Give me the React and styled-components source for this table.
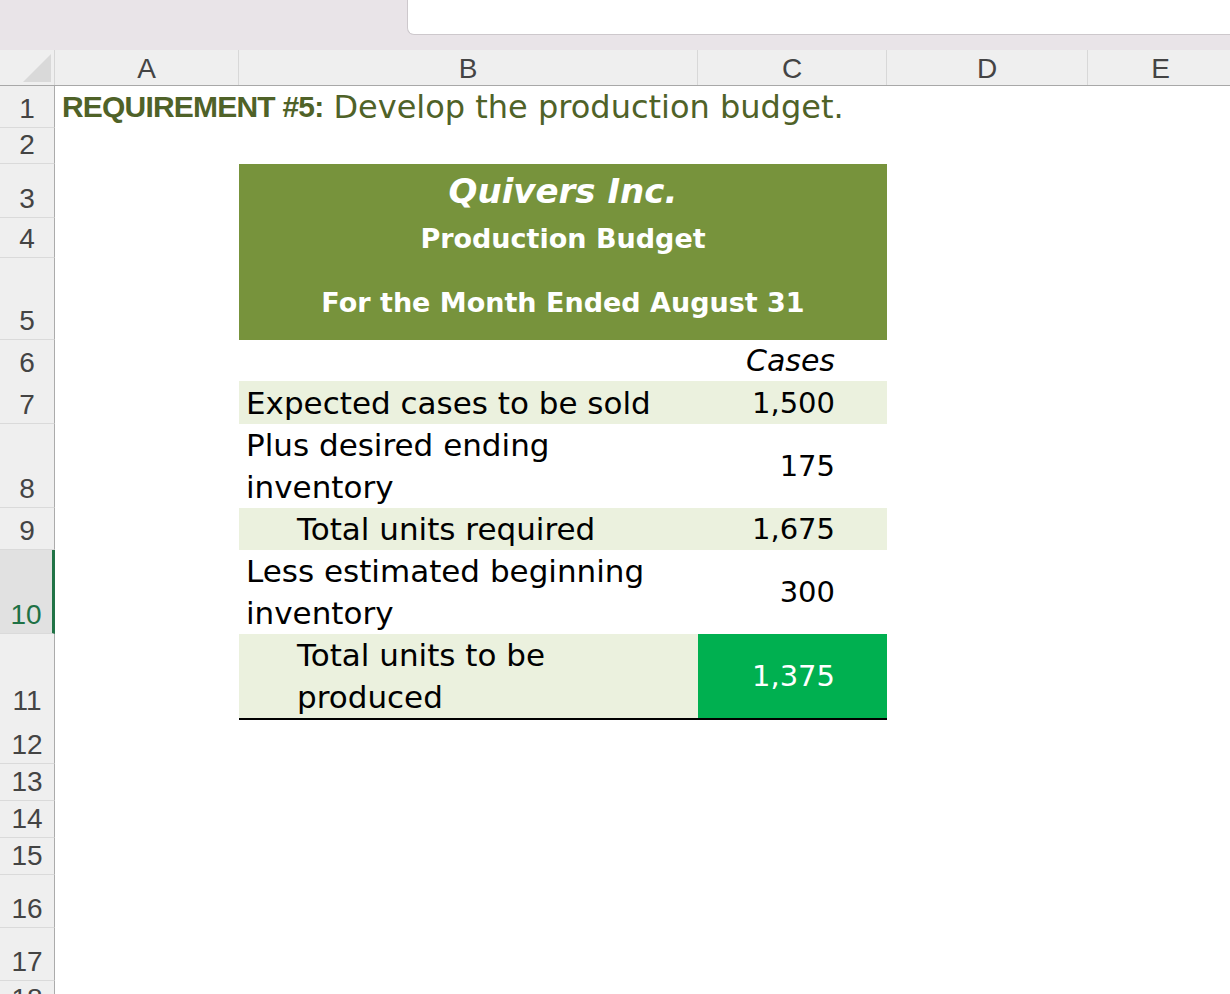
import React from 'react';
import styled, { createGlobalStyle } from 'styled-components';

const GlobalStyle = createGlobalStyle`
  html, body { margin: 0; padding: 0; background: #ffffff; }
  body { font-family: "DejaVu Sans", sans-serif; overflow: hidden; }
  #root { width: 1230px; height: 994px; overflow: hidden; }
`;

const COLS = '55px 184px 459px 189px 201px 146px 1fr';

const Page = styled.div`
  width: 1230px;
  height: 994px;
  overflow: hidden;
  background: #ffffff;
  display: flex;
  flex-direction: column;
`;

const TopBar = styled.div`
  flex: none;
  height: 50px;
  background: #e9e4e8;
  display: flex;
  justify-content: flex-end;
  align-items: flex-start;
`;

const FormulaBox = styled.div`
  width: 823px;
  height: 35px;
  box-sizing: border-box;
  background: #ffffff;
  border-left: 1px solid #cdc8cc;
  border-bottom: 1px solid #cdc8cc;
  border-bottom-left-radius: 7px;
`;

const Sheet = styled.div`
  display: flex;
  flex-direction: column;
  flex: none;
`;

const HeaderRow = styled.div`
  display: grid;
  grid-template-columns: ${COLS};
  height: 36px;
  box-sizing: border-box;
  background: #efefef;
  border-bottom: 1px solid #a8a8a8;
`;

const Corner = styled.div`
  display: flex;
  align-items: flex-end;
  justify-content: flex-end;
  padding: 0 3px 3px 0;
  border-right: 1px solid #d6d6d6;
`;

const ColHead = styled.div`
  display: flex;
  align-items: center;
  justify-content: center;
  padding-top: 3px;
  border-right: 1px solid #d8d8d8;
  font-family: "Liberation Sans", Arial, sans-serif;
  font-size: 28px;
  color: #444444;
`;

const Row = styled.div`
  display: grid;
  grid-template-columns: ${COLS};
  height: ${(p) => p.$h}px;
  flex: none;
`;

const RowHead = styled.div`
  grid-column: 1;
  display: flex;
  align-items: flex-end;
  justify-content: center;
  box-sizing: border-box;
  padding-bottom: 4px;
  background: ${(p) => (p.$selected ? '#e1e1e1' : '#efefef')};
  border-right: ${(p) => (p.$selected ? '3px solid #217346' : '1px solid #ababab')};
  border-bottom: 1px solid #dadada;
  font-family: "Liberation Sans", Arial, sans-serif;
  font-size: 28px;
  line-height: 1;
  color: ${(p) => (p.$selected ? '#1e7145' : '#444444')};
`;

const TitleCell = styled.div`
  grid-column: 2 / span 6;
  display: flex;
  align-items: flex-end;
  padding-left: 7px;
  white-space: nowrap;
  font-size: 32px;
  line-height: 42px;
  color: #4f6228;
`;

const TitleStrong = styled.span`
  font-family: "Liberation Sans", Arial, sans-serif;
  font-weight: bold;
  font-size: 30px;
  letter-spacing: -0.8px;
  margin-right: 10px;
`;

const Banner = styled.div`
  grid-column: 3 / span 2;
  display: flex;
  align-items: center;
  justify-content: center;
  padding-top: ${(p) => p.$shift || 0}px;
  background: #77933c;
  color: #ffffff;
  font-weight: bold;
  font-style: ${(p) => (p.$italic ? 'italic' : 'normal')};
  font-size: ${(p) => p.$size}px;
  white-space: nowrap;
`;

const Label = styled.div`
  grid-column: 3;
  display: flex;
  align-items: flex-end;
  box-sizing: border-box;
  padding-left: ${(p) => (p.$indent ? 58 : 7)}px;
  background: ${(p) => (p.$shade ? '#ebf1de' : 'transparent')};
  border-bottom: ${(p) => (p.$total ? '2px solid #000000' : 'none')};
  font-size: 31px;
  line-height: 42px;
  color: #000000;
  white-space: nowrap;
`;

const LabelText = styled.span`
  display: block;
`;

const Amount = styled.div`
  grid-column: 4;
  display: flex;
  align-items: center;
  justify-content: flex-end;
  box-sizing: border-box;
  padding-right: 52px;
  background: ${(p) => (p.$total ? '#00b050' : p.$shade ? '#ebf1de' : 'transparent')};
  border-bottom: ${(p) => (p.$total ? '2px solid #000000' : 'none')};
  font-size: 29px;
  line-height: 42px;
  color: ${(p) => (p.$total ? '#ffffff' : '#000000')};
  white-space: nowrap;
`;

const UnitHeading = styled(Amount)`
  align-items: flex-end;
  font-style: italic;
  font-size: 30px;
`;

const columns = ['A', 'B', 'C', 'D', 'E'];

const heights = {
  1: 42, 2: 36, 3: 54, 4: 40, 5: 82, 6: 41, 7: 43, 8: 84, 9: 42,
  10: 84, 11: 84, 12: 46, 13: 37, 14: 37, 15: 37, 16: 53, 17: 53, 18: 37,
};

const items = {
  7: { label: ['Expected cases to be sold'], value: '1,500', shade: true },
  8: { label: ['Plus desired ending', 'inventory'], value: '175' },
  9: { label: ['Total units required'], value: '1,675', shade: true, indent: true },
  10: { label: ['Less estimated beginning', 'inventory'], value: '300' },
  11: { label: ['Total units to be', 'produced'], value: '1,375', shade: true, indent: true, total: true },
};

const banners = {
  3: { text: 'Quivers Inc.', size: 34, italic: true },
  4: { text: 'Production Budget', size: 27 },
  5: { text: 'For the Month Ended August 31', size: 27, shift: 6 },
};

const SELECTED_ROW = 10;

function RowContent({ n }) {
  if (n === 1) {
    return (
      <TitleCell>
        <TitleStrong>REQUIREMENT #5:</TitleStrong>
        Develop the production budget.
      </TitleCell>
    );
  }
  if (banners[n]) {
    const b = banners[n];
    return (
      <Banner $size={b.size} $italic={b.italic} $shift={b.shift}>
        {b.text}
      </Banner>
    );
  }
  if (n === 6) {
    return <UnitHeading>Cases</UnitHeading>;
  }
  if (items[n]) {
    const it = items[n];
    return (
      <>
        <Label $shade={it.shade} $indent={it.indent} $total={it.total}>
          <LabelText>
            {it.label.map((line, i) => (
              <React.Fragment key={i}>
                {i > 0 && <br />}
                {line}
              </React.Fragment>
            ))}
          </LabelText>
        </Label>
        <Amount $shade={it.shade} $total={it.total}>
          {it.value}
        </Amount>
      </>
    );
  }
  return null;
}

export default function App() {
  const rowNumbers = Object.keys(heights).map(Number);
  return (
    <>
      <GlobalStyle />
      <Page>
        <TopBar>
          <FormulaBox />
        </TopBar>
        <Sheet>
          <HeaderRow>
            <Corner>
              <svg width="28" height="28" viewBox="0 0 28 28">
                <polygon points="28,0 28,28 0,28" fill="#d9d9d9" />
              </svg>
            </Corner>
            {columns.map((c) => (
              <ColHead key={c}>{c}</ColHead>
            ))}
          </HeaderRow>
          {rowNumbers.map((n) => (
            <Row key={n} $h={heights[n]}>
              <RowHead $selected={n === SELECTED_ROW}>{n}</RowHead>
              <RowContent n={n} />
            </Row>
          ))}
        </Sheet>
      </Page>
    </>
  );
}
